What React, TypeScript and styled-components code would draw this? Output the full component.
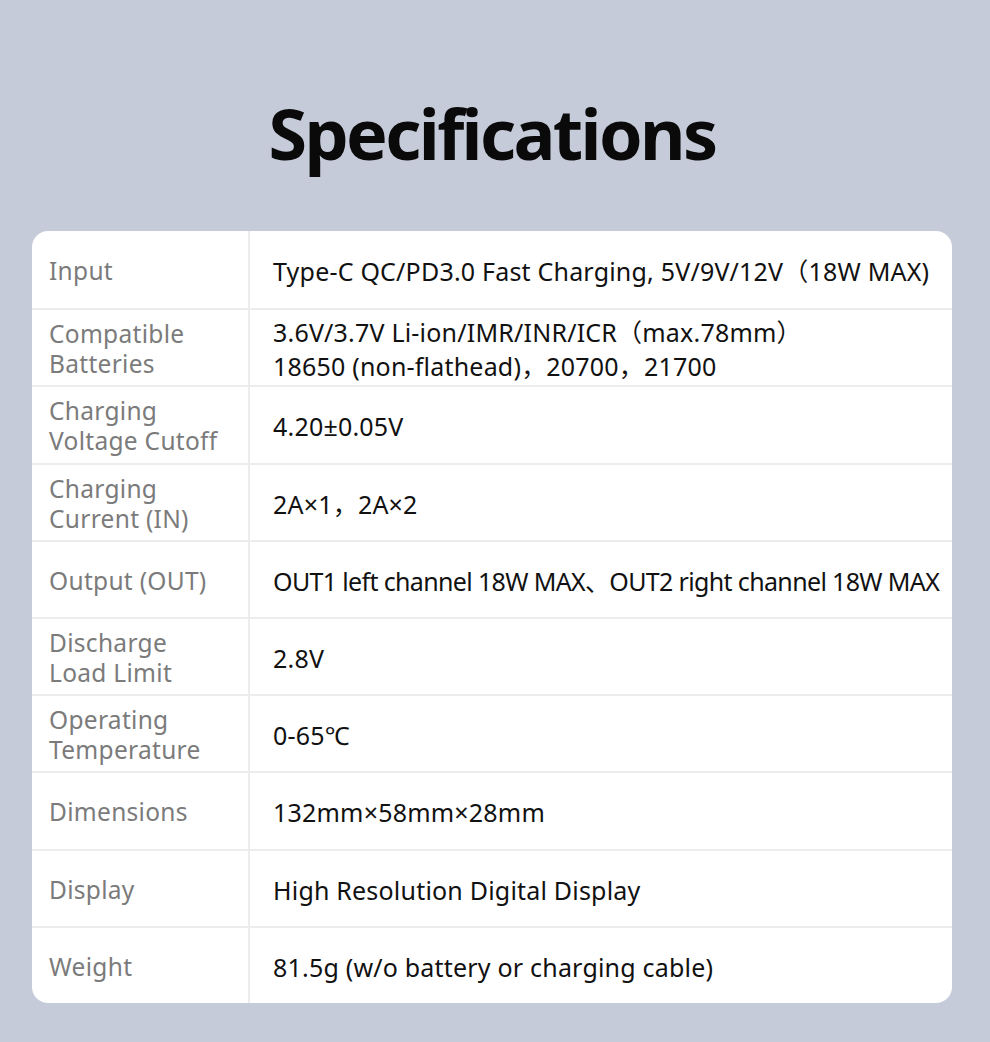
import React from 'react';
import styled, { createGlobalStyle } from 'styled-components';

const GlobalStyle = createGlobalStyle`
  html, body {
    margin: 0;
    padding: 0;
    background: #c6cbd9;
  }
  body {
    font-family: "Noto Sans", "Open Sans", "Noto Sans CJK SC", sans-serif;
  }
`;

const Page = styled.div`
  width: 990px;
  height: 1042px;
  box-sizing: border-box;
  padding: 0 38px 0 32px;
  background: #c6cbd9;
  display: flex;
  flex-direction: column;
`;

const Title = styled.h1`
  margin: 0;
  height: 231px;
  display: flex;
  align-items: center;
  justify-content: center;
  padding-top: 34px;
  box-sizing: border-box;
  font-size: 70px;
  font-weight: 700;
  color: #0a0a0a;
  letter-spacing: -2.6px;
`;

const Card = styled.div`
  background: #ffffff;
  border-radius: 16px;
  overflow: hidden;
  display: grid;
  grid-template-columns: 218px 1fr;
`;

const Label = styled.div<{ $first?: boolean }>`
  height: 77.2px;
  box-sizing: border-box;
  padding: 3px 0 0 17px;
  display: flex;
  align-items: center;
  color: #7b7b7b;
  font-size: 24.5px;
  line-height: 30px;
  letter-spacing: 0.3px;
  border-right: 2px solid #ececec;
  border-top: ${p => (p.$first ? 'none' : '2px solid #ececec')};
`;

const Value = styled.div<{ $first?: boolean; $tight?: boolean }>`
  height: 77.2px;
  box-sizing: border-box;
  padding: 3px 0 0 23px;
  display: flex;
  flex-direction: column;
  justify-content: center;
  color: #111111;
  font-size: 25px;
  line-height: 34px;
  letter-spacing: ${p => (p.$tight ? '-0.65px' : '0.2px')};
  white-space: nowrap;
  border-top: ${p => (p.$first ? 'none' : '2px solid #ececec')};
`;

interface SpecRow {
  label: string[];
  value: string[];
  tight?: boolean;
}

const specs: SpecRow[] = [
  { label: ['Input'], value: ['Type-C QC/PD3.0 Fast Charging, 5V/9V/12V（18W MAX)'] },
  {
    label: ['Compatible', 'Batteries'],
    value: ['3.6V/3.7V Li-ion/IMR/INR/ICR（max.78mm）', '18650 (non-flathead)，20700，21700'],
  },
  { label: ['Charging', 'Voltage Cutoff'], value: ['4.20±0.05V'] },
  { label: ['Charging', 'Current (IN)'], value: ['2A×1，2A×2'] },
  {
    label: ['Output (OUT)'],
    value: ['OUT1 left channel 18W MAX、OUT2 right channel 18W MAX'],
    tight: true,
  },
  { label: ['Discharge', 'Load Limit'], value: ['2.8V'] },
  { label: ['Operating', 'Temperature'], value: ['0-65℃'] },
  { label: ['Dimensions'], value: ['132mm×58mm×28mm'] },
  { label: ['Display'], value: ['High Resolution Digital Display'] },
  { label: ['Weight'], value: ['81.5g (w/o battery or charging cable)'] },
];

export default function App() {
  return (
    <>
      <GlobalStyle />
      <Page>
        <Title>Specifications</Title>
        <Card>
          {specs.map((row, i) => {
            const first = i === 0;
            return (
              <React.Fragment key={i}>
                <Label $first={first}>
                  <span>
                    {row.label.map((line, j) => (
                      <React.Fragment key={j}>
                        {j > 0 && <br />}
                        {line}
                      </React.Fragment>
                    ))}
                  </span>
                </Label>
                <Value $first={first} $tight={row.tight}>
                  {row.value.map((line, j) => (
                    <span key={j}>{line}</span>
                  ))}
                </Value>
              </React.Fragment>
            );
          })}
        </Card>
      </Page>
    </>
  );
}
